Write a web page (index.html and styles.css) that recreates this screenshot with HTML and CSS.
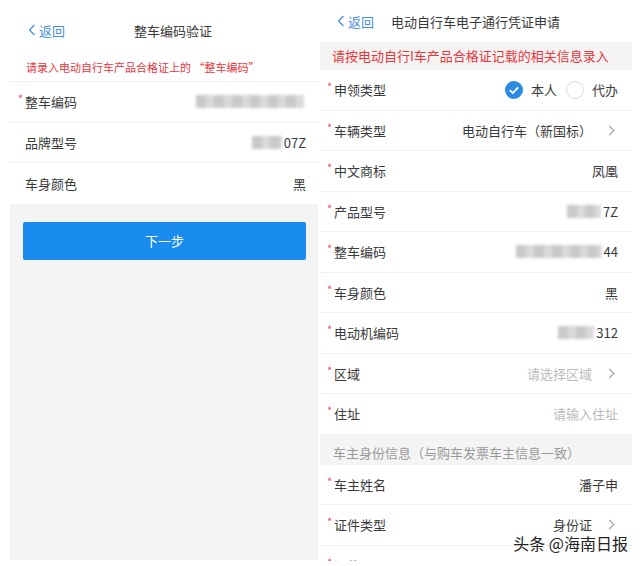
FILE: index.html
```html
<!DOCTYPE html>
<html lang="zh-CN">
<head>
    <meta charset="UTF-8">
    <meta name="viewport" content="width=device-width, initial-scale=1.0">
    <title>电动自行车电子通行凭证申请</title>
    <link rel="stylesheet" href="styles.css">
</head>
<body>
    <div class="page">
        <!-- step 1: frame number check -->
        <section class="panel verify">
            <header class="nav nav-center">
                <a class="back" href="#">
                    <svg width="8" height="12" viewBox="0 0 8 12"><polyline points="6.5,1 1.5,6 6.5,11" fill="none" stroke="#4a90e2" stroke-width="1.3"/></svg>
                    返回
                </a>
                <h1>整车编码验证</h1>
                <span></span>
            </header>
            <p class="notice">请录入电动自行车产品合格证上的 “整车编码”</p>
            <ul class="form">
                <li class="row"><span class="label req">整车编码</span><span class="value"><span class="blur" style="width:108px"></span></span></li>
                <li class="row"><span class="label">品牌型号</span><span class="value"><span class="blur" style="width:30px"></span>07Z</span></li>
                <li class="row"><span class="label">车身颜色</span><span class="value">黑</span></li>
            </ul>
            <div class="actions">
                <button class="btn-primary">下一步</button>
            </div>
        </section>

        <!-- step 2: application form -->
        <section class="panel apply">
            <header class="nav">
                <a class="back" href="#">
                    <svg width="8" height="12" viewBox="0 0 8 12"><polyline points="6.5,1 1.5,6 6.5,11" fill="none" stroke="#4a90e2" stroke-width="1.3"/></svg>
                    返回
                </a>
                <h1>电动自行车电子通行凭证申请</h1>
            </header>
            <p class="notice notice-bar">请按电动自行I车产品合格证记载的相关信息录入</p>
            <ul class="form">
                <li class="row">
                    <span class="label req">申领类型</span>
                    <span class="value radios">
                        <span class="radio checked">
                            <svg width="18" height="18" viewBox="0 0 18 18"><circle cx="9" cy="9" r="9" fill="#2b8ae2"/><polyline points="4.8,9.2 7.8,12 13.2,6.3" fill="none" stroke="#fff" stroke-width="1.8"/></svg>
                            本人
                        </span>
                        <span class="radio">
                            <svg width="18" height="18" viewBox="0 0 18 18"><circle cx="9" cy="9" r="8.5" fill="#fff" stroke="#dcdcdc"/></svg>
                            代办
                        </span>
                    </span>
                </li>
                <li class="row"><span class="label req">车辆类型</span><span class="value link">电动自行车（新国标）<i class="chev"></i></span></li>
                <li class="row"><span class="label req">中文商标</span><span class="value">凤凰</span></li>
                <li class="row"><span class="label req">产品型号</span><span class="value"><span class="blur" style="width:34px"></span>7Z</span></li>
                <li class="row"><span class="label req">整车编码</span><span class="value"><span class="blur" style="width:86px"></span>44</span></li>
                <li class="row"><span class="label req">车身颜色</span><span class="value">黑</span></li>
                <li class="row"><span class="label req">电动机编码</span><span class="value"><span class="blur" style="width:36px"></span>312</span></li>
                <li class="row"><span class="label req">区域</span><span class="value link placeholder">请选择区域<i class="chev"></i></span></li>
                <li class="row"><span class="label req">住址</span><span class="value placeholder">请输入住址</span></li>
            </ul>
            <div class="section-title">车主身份信息（与购车发票车主信息一致）</div>
            <ul class="form">
                <li class="row"><span class="label req">车主姓名</span><span class="value">潘子申</span></li>
                <li class="row"><span class="label req">证件类型</span><span class="value link">身份证<i class="chev"></i></span></li>
                <li class="row"><span class="label req">证件号码</span><span class="value"></span></li>
            </ul>
        </section>

        <div class="watermark">头条 @海南日报</div>
    </div>
</body>
</html>
```

FILE: styles.css
```css
* {
    box-sizing: border-box;
}
body {
    margin: 0;
    background: #fff;
    font-family: "Noto Sans CJK SC", "Noto Sans", sans-serif;
    color: #3a3a3a;
    font-size: 13px;
}
ul {
    list-style: none;
    margin: 0;
    padding: 0;
}
p, h1 {
    margin: 0;
}
.page {
    position: relative;
    display: flex;
    gap: 2px;
    padding-left: 10px;
    height: 566px;
}
.panel {
    display: flex;
    flex-direction: column;
    background: #fff;
    overflow: hidden;
}
.panel > * {
    flex-shrink: 0;
}
.verify {
    width: 308px;
    height: 560px;
}
.apply {
    width: 312px;
    height: 561px;
}
.nav {
    display: flex;
    align-items: center;
    gap: 17px;
    height: 42px;
    padding-left: 17px;
}
.nav h1 {
    font-size: 13px;
    font-weight: normal;
    color: #3a3a3a;
}
.nav-center {
    display: grid;
    grid-template-columns: 1fr auto 1fr;
    height: 56px;
    padding-top: 4px;
    padding-left: 18px;
}
.back {
    display: flex;
    align-items: center;
    gap: 3px;
    color: #4a90e2;
    text-decoration: none;
    font-size: 13px;
}
.notice {
    color: #e8363c;
    font-size: 11px;
    height: 26px;
    line-height: 22px;
    padding-left: 16px;
    border-bottom: 1px solid #eee;
}
.notice-bar {
    font-size: 13px;
    height: 28px;
    line-height: 28px;
    padding-left: 12px;
    background: #f6f3f3;
    border-bottom: none;
}
.row {
    display: flex;
    align-items: center;
    justify-content: space-between;
    height: 40.5px;
    padding: 0 14px 0 7px;
    border-bottom: 1px solid #f0f0f0;
}
.verify .row {
    padding: 0 12px 0 8px;
}
.verify .row:last-child {
    border-bottom: none;
}
.label {
    padding-left: 7px;
    position: relative;
}
.label.req::before {
    content: "*";
    position: absolute;
    left: 0;
    top: -2px;
    color: #e8505a;
    font-size: 11px;
}
.value {
    display: flex;
    align-items: center;
}
.placeholder {
    color: #bbb;
}
.blur {
    display: inline-block;
    height: 13px;
    background: repeating-linear-gradient(90deg, #c9c9c9 0 10px, #dadada 10px 18px);
    filter: blur(1.5px);
    margin-right: 2px;
}
.chev {
    display: inline-block;
    width: 7px;
    height: 7px;
    border-top: 1.2px solid #999;
    border-right: 1.2px solid #999;
    transform: rotate(45deg);
    margin-left: 14px;
    margin-right: 5px;
}
.radios {
    gap: 9px;
}
.radio {
    display: flex;
    align-items: center;
    gap: 8px;
}
.section-title {
    height: 30px;
    padding: 5px 0 0 13px;
    line-height: 26px;
    background: #f4f4f4;
    color: #999;
}
.actions {
    flex: 1;
    background: #f4f4f5;
    padding: 18px 12px 0 13px;
}
.btn-primary {
    width: 100%;
    height: 38px;
    border: none;
    border-radius: 2px;
    background: #1a8cf0;
    color: #fff;
    font-family: inherit;
    font-size: 13px;
}
.watermark {
    position: absolute;
    right: 12px;
    bottom: 14px;
    font-size: 16px;
    line-height: 18px;
    color: #222;
    text-shadow: 0 0 3px #fff, 0 0 3px #fff;
}
```
